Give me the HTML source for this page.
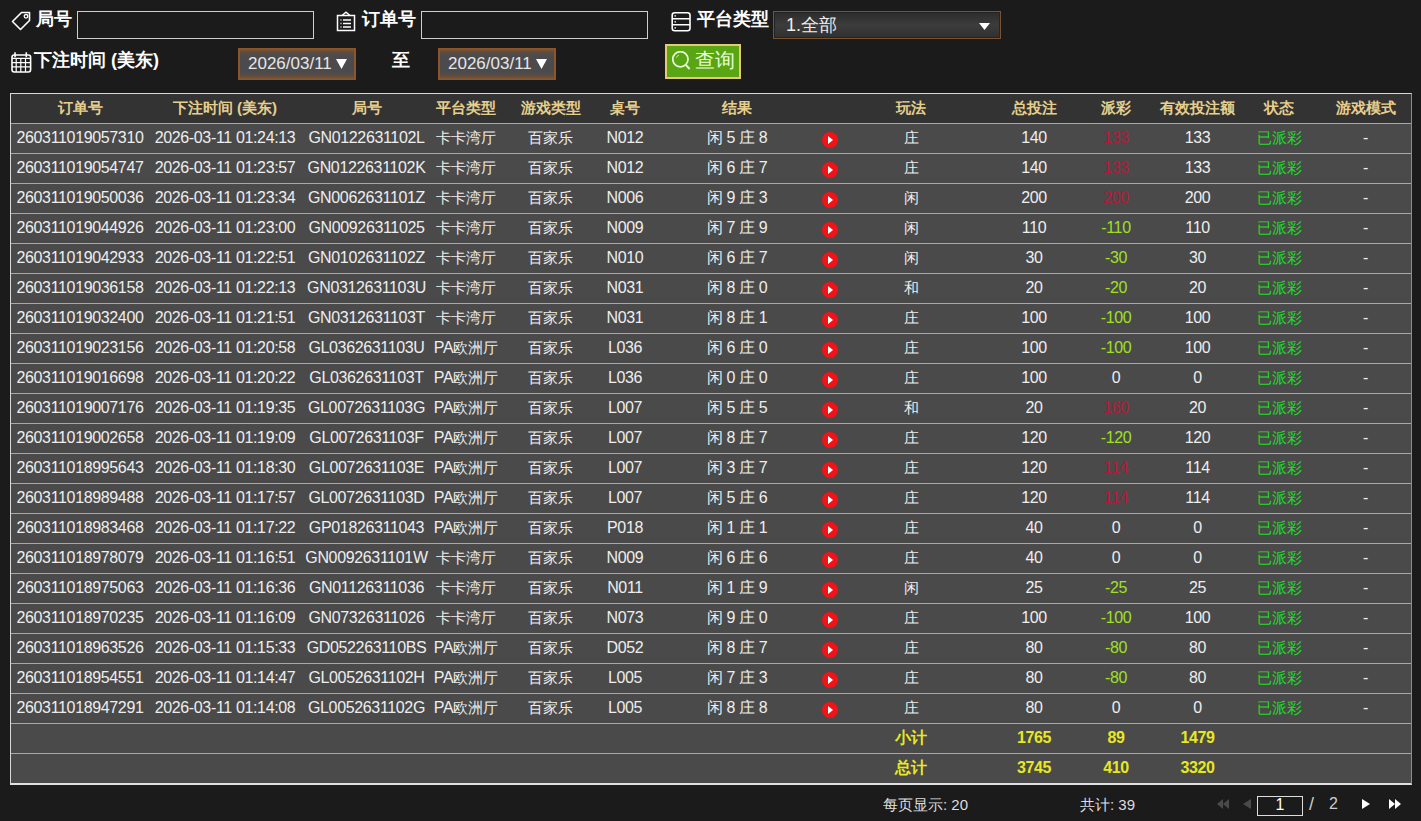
<!DOCTYPE html>
<html><head><meta charset="utf-8">
<style>
html,body{margin:0;padding:0}
body{width:1421px;height:821px;overflow:hidden;position:relative;background:#1b1b1b;font-family:"Liberation Sans",sans-serif;color:#eee}
.lbl{position:absolute;font-weight:bold;font-size:18px;color:#fff;line-height:20px;white-space:nowrap}
.ico{position:absolute}
.inp{position:absolute;box-sizing:border-box;border:1px solid #cfcfcf;background:#1b1b1b}
.date{position:absolute;box-sizing:border-box;border:solid #8e5628;border-width:1px 2px;background:linear-gradient(#84542c 0,#5e4c3e 3px,#4b4b4d 7px,#4b4b4d 23px,#5e4c3e 27px,#84542c 30px);color:#e6e6e6;font-size:17px;line-height:30px;padding-left:8px;white-space:nowrap}
.sel{position:absolute;box-sizing:border-box;border:1px solid #7a5230;box-shadow:inset 0 0 0 1px #242424;background:linear-gradient(#2c2c2c,#3c3c3c 50%,#303030);color:#eee;font-size:18px;line-height:26px;padding-left:12px}
.btn{position:absolute;box-sizing:border-box;border:2px solid #e6c878;background:#5aa514;color:#eaffd8;font-size:20px;line-height:28px}
.tbl{position:absolute;left:10px;top:93px;width:1402px;height:692px;box-sizing:border-box;border:1px solid #d8d8d8;border-right-color:#8c8c8c;border-bottom:2px solid #e0e0e0;background:#4a4a4a}
.hd{position:absolute;left:11px;top:94px;width:1400px;height:29px;background:#333}
.rw{position:absolute;left:11px;width:1400px;height:30px;line-height:30px;font-size:16px;letter-spacing:-0.35px;color:#eee}
.hd s,.rw s{position:absolute;top:0;text-decoration:none;white-space:nowrap;transform:translateX(-50%)}
.hd s{color:#e6cf8c;font-weight:bold;font-size:15px;line-height:27px}
.rw i{position:absolute;top:8.5px;width:16px;height:16px;border-radius:50%;background:#f01418}
.rw i:after{content:"";position:absolute;left:6px;top:4px;border-left:5px solid #fff;border-top:4px solid transparent;border-bottom:4px solid transparent}
.cj{font-size:14.5px;letter-spacing:0}
.cj u{text-decoration:none;font-size:16px;letter-spacing:-0.35px}
.rd{color:#b8173a}
.gn{color:#9ee21e}
.st{color:#22de22}
.sm s{color:#e8e820;font-weight:bold}
b{position:absolute;left:11px;width:1400px;height:1px;background:#a8a8a8}
.ft{position:absolute;font-size:15px;color:#ddd;line-height:20px;white-space:nowrap}
</style></head><body>
<!-- row 1 controls -->
<svg class="ico" style="left:11px;top:11px" width="20" height="20" viewBox="0 0 20 20"><path d="M1.5 10.5 L10.5 1.5 L18.5 1.5 L18.5 9.5 L9.5 18.5 Z" fill="none" stroke="#fff" stroke-width="1.6" stroke-linejoin="round"/><circle cx="15" cy="5.3" r="1.8" fill="none" stroke="#fff" stroke-width="1.3"/></svg>
<div class="lbl" style="left:36px;top:9px">局号</div>
<div class="inp" style="left:77px;top:11px;width:237px;height:28px"></div>
<svg class="ico" style="left:336px;top:11px" width="20" height="21" viewBox="0 0 20 21"><rect x="1.5" y="4.5" width="17" height="15" fill="none" stroke="#fff" stroke-width="1.5"/><path d="M6 4.5 L10 1.2 L14 4.5" fill="none" stroke="#fff" stroke-width="1.4"/><path d="M7 9h8M7 12.5h8M7 16h8" stroke="#fff" stroke-width="1.3"/><path d="M4.5 9h1M4.5 12.5h1M4.5 16h1" stroke="#fff" stroke-width="1.3"/></svg>
<div class="lbl" style="left:362px;top:9px">订单号</div>
<div class="inp" style="left:421px;top:11px;width:227px;height:28px"></div>
<svg class="ico" style="left:671px;top:12px" width="20" height="20" viewBox="0 0 20 20"><rect x="1.2" y="0.8" width="17.8" height="18" rx="2.5" fill="none" stroke="#fff" stroke-width="1.6"/><path d="M1.2 6.8h17.8M1.2 12.8h17.8" stroke="#fff" stroke-width="1.5"/><circle cx="4.2" cy="3.8" r="0.9" fill="#ddd"/><circle cx="4.2" cy="9.8" r="0.9" fill="#ddd"/><circle cx="4.2" cy="15.8" r="0.9" fill="#ddd"/></svg>
<div class="lbl" style="left:697px;top:9px">平台类型</div>
<div class="sel" style="left:773px;top:11px;width:228px;height:28px">1.全部<svg style="position:absolute;left:205px;top:11px" width="11" height="7" viewBox="0 0 11 7"><path d="M0 0H11L5.5 7Z" fill="#fff"/></svg></div>
<!-- row 2 controls -->
<svg class="ico" style="left:11px;top:52px" width="21" height="21" viewBox="0 0 21 21"><rect x="1" y="3" width="18.6" height="17" rx="2.2" fill="none" stroke="#fff" stroke-width="1.6"/><path d="M4 0.3v5M15.3 0.3v5" stroke="#fff" stroke-width="1.6"/><path d="M1 6.3h18.6M1 10.6h18.6M1 14.8h18.6M5.2 6.3v13.7M9.8 6.3v13.7M14.5 6.3v13.7" stroke="#fff" stroke-width="1.2"/></svg>
<div class="lbl" style="left:34px;top:50px">下注时间 (美东)</div>
<div class="date" style="left:238px;top:48px;width:118px;height:32px">2026/03/11<svg style="position:absolute;left:96px;top:10px" width="11" height="10" viewBox="0 0 11 10"><path d="M0 0H11L5.5 10Z" fill="#fff"/></svg></div>
<div class="lbl" style="left:392px;top:50px">至</div>
<div class="date" style="left:438px;top:48px;width:118px;height:32px">2026/03/11<svg style="position:absolute;left:96px;top:10px" width="11" height="10" viewBox="0 0 11 10"><path d="M0 0H11L5.5 10Z" fill="#fff"/></svg></div>
<div class="btn" style="left:665px;top:44px;width:76px;height:35px"><svg style="position:absolute;left:5px;top:5px" width="20" height="22" viewBox="0 0 20 22"><circle cx="8.4" cy="8.3" r="7.6" fill="none" stroke="#eaffd8" stroke-width="1.7"/><path d="M4.5 6.5A4.5 4.5 0 0 1 7 4" fill="none" stroke="#cfe8b0" stroke-width="1"/><path d="M13.8 13.8L17.6 18" stroke="#eaffd8" stroke-width="1.9"/></svg><span style="position:absolute;left:28px;top:0">查询</span></div>
<!-- table -->
<div class="tbl"></div>
<div class="hd"><s style="left:69px">订单号</s><s style="left:214px">下注时间 (美东)</s><s style="left:355.5px">局号</s><s style="left:455px">平台类型</s><s style="left:539.5px">游戏类型</s><s style="left:614px">桌号</s><s style="left:726px">结果</s><s style="left:900px">玩法</s><s style="left:1023px">总投注</s><s style="left:1105px">派彩</s><s style="left:1186.5px">有效投注额</s><s style="left:1268px">状态</s><s style="left:1354.5px">游戏模式</s></div>
<div class="rw" style="top:123px"><s style="left:69px">260311019057310</s><s style="left:214px">2026-03-11 01:24:13</s><s style="left:355.5px">GN0122631102L</s><s style="left:455px" class="cj">卡卡湾厅</s><s style="left:539.5px" class="cj">百家乐</s><s style="left:614px">N012</s><s style="left:726px">闲 5 庄 8</s><i style="left:811px"></i><s style="left:900px" class="cj">庄</s><s style="left:1023px">140</s><s style="left:1105px" class="rd">133</s><s style="left:1186.5px">133</s><s style="left:1268px" class="st cj">已派彩</s><s style="left:1354.5px">-</s></div>
<div class="rw" style="top:153px"><s style="left:69px">260311019054747</s><s style="left:214px">2026-03-11 01:23:57</s><s style="left:355.5px">GN0122631102K</s><s style="left:455px" class="cj">卡卡湾厅</s><s style="left:539.5px" class="cj">百家乐</s><s style="left:614px">N012</s><s style="left:726px">闲 6 庄 7</s><i style="left:811px"></i><s style="left:900px" class="cj">庄</s><s style="left:1023px">140</s><s style="left:1105px" class="rd">133</s><s style="left:1186.5px">133</s><s style="left:1268px" class="st cj">已派彩</s><s style="left:1354.5px">-</s></div>
<div class="rw" style="top:183px"><s style="left:69px">260311019050036</s><s style="left:214px">2026-03-11 01:23:34</s><s style="left:355.5px">GN0062631101Z</s><s style="left:455px" class="cj">卡卡湾厅</s><s style="left:539.5px" class="cj">百家乐</s><s style="left:614px">N006</s><s style="left:726px">闲 9 庄 3</s><i style="left:811px"></i><s style="left:900px" class="cj">闲</s><s style="left:1023px">200</s><s style="left:1105px" class="rd">200</s><s style="left:1186.5px">200</s><s style="left:1268px" class="st cj">已派彩</s><s style="left:1354.5px">-</s></div>
<div class="rw" style="top:213px"><s style="left:69px">260311019044926</s><s style="left:214px">2026-03-11 01:23:00</s><s style="left:355.5px">GN00926311025</s><s style="left:455px" class="cj">卡卡湾厅</s><s style="left:539.5px" class="cj">百家乐</s><s style="left:614px">N009</s><s style="left:726px">闲 7 庄 9</s><i style="left:811px"></i><s style="left:900px" class="cj">闲</s><s style="left:1023px">110</s><s style="left:1105px" class="gn">-110</s><s style="left:1186.5px">110</s><s style="left:1268px" class="st cj">已派彩</s><s style="left:1354.5px">-</s></div>
<div class="rw" style="top:243px"><s style="left:69px">260311019042933</s><s style="left:214px">2026-03-11 01:22:51</s><s style="left:355.5px">GN0102631102Z</s><s style="left:455px" class="cj">卡卡湾厅</s><s style="left:539.5px" class="cj">百家乐</s><s style="left:614px">N010</s><s style="left:726px">闲 6 庄 7</s><i style="left:811px"></i><s style="left:900px" class="cj">闲</s><s style="left:1023px">30</s><s style="left:1105px" class="gn">-30</s><s style="left:1186.5px">30</s><s style="left:1268px" class="st cj">已派彩</s><s style="left:1354.5px">-</s></div>
<div class="rw" style="top:273px"><s style="left:69px">260311019036158</s><s style="left:214px">2026-03-11 01:22:13</s><s style="left:355.5px">GN0312631103U</s><s style="left:455px" class="cj">卡卡湾厅</s><s style="left:539.5px" class="cj">百家乐</s><s style="left:614px">N031</s><s style="left:726px">闲 8 庄 0</s><i style="left:811px"></i><s style="left:900px" class="cj">和</s><s style="left:1023px">20</s><s style="left:1105px" class="gn">-20</s><s style="left:1186.5px">20</s><s style="left:1268px" class="st cj">已派彩</s><s style="left:1354.5px">-</s></div>
<div class="rw" style="top:303px"><s style="left:69px">260311019032400</s><s style="left:214px">2026-03-11 01:21:51</s><s style="left:355.5px">GN0312631103T</s><s style="left:455px" class="cj">卡卡湾厅</s><s style="left:539.5px" class="cj">百家乐</s><s style="left:614px">N031</s><s style="left:726px">闲 8 庄 1</s><i style="left:811px"></i><s style="left:900px" class="cj">庄</s><s style="left:1023px">100</s><s style="left:1105px" class="gn">-100</s><s style="left:1186.5px">100</s><s style="left:1268px" class="st cj">已派彩</s><s style="left:1354.5px">-</s></div>
<div class="rw" style="top:333px"><s style="left:69px">260311019023156</s><s style="left:214px">2026-03-11 01:20:58</s><s style="left:355.5px">GL0362631103U</s><s style="left:455px" class="cj"><u>PA</u>欧洲厅</s><s style="left:539.5px" class="cj">百家乐</s><s style="left:614px">L036</s><s style="left:726px">闲 6 庄 0</s><i style="left:811px"></i><s style="left:900px" class="cj">庄</s><s style="left:1023px">100</s><s style="left:1105px" class="gn">-100</s><s style="left:1186.5px">100</s><s style="left:1268px" class="st cj">已派彩</s><s style="left:1354.5px">-</s></div>
<div class="rw" style="top:363px"><s style="left:69px">260311019016698</s><s style="left:214px">2026-03-11 01:20:22</s><s style="left:355.5px">GL0362631103T</s><s style="left:455px" class="cj"><u>PA</u>欧洲厅</s><s style="left:539.5px" class="cj">百家乐</s><s style="left:614px">L036</s><s style="left:726px">闲 0 庄 0</s><i style="left:811px"></i><s style="left:900px" class="cj">庄</s><s style="left:1023px">100</s><s style="left:1105px">0</s><s style="left:1186.5px">0</s><s style="left:1268px" class="st cj">已派彩</s><s style="left:1354.5px">-</s></div>
<div class="rw" style="top:393px"><s style="left:69px">260311019007176</s><s style="left:214px">2026-03-11 01:19:35</s><s style="left:355.5px">GL0072631103G</s><s style="left:455px" class="cj"><u>PA</u>欧洲厅</s><s style="left:539.5px" class="cj">百家乐</s><s style="left:614px">L007</s><s style="left:726px">闲 5 庄 5</s><i style="left:811px"></i><s style="left:900px" class="cj">和</s><s style="left:1023px">20</s><s style="left:1105px" class="rd">160</s><s style="left:1186.5px">20</s><s style="left:1268px" class="st cj">已派彩</s><s style="left:1354.5px">-</s></div>
<div class="rw" style="top:423px"><s style="left:69px">260311019002658</s><s style="left:214px">2026-03-11 01:19:09</s><s style="left:355.5px">GL0072631103F</s><s style="left:455px" class="cj"><u>PA</u>欧洲厅</s><s style="left:539.5px" class="cj">百家乐</s><s style="left:614px">L007</s><s style="left:726px">闲 8 庄 7</s><i style="left:811px"></i><s style="left:900px" class="cj">庄</s><s style="left:1023px">120</s><s style="left:1105px" class="gn">-120</s><s style="left:1186.5px">120</s><s style="left:1268px" class="st cj">已派彩</s><s style="left:1354.5px">-</s></div>
<div class="rw" style="top:453px"><s style="left:69px">260311018995643</s><s style="left:214px">2026-03-11 01:18:30</s><s style="left:355.5px">GL0072631103E</s><s style="left:455px" class="cj"><u>PA</u>欧洲厅</s><s style="left:539.5px" class="cj">百家乐</s><s style="left:614px">L007</s><s style="left:726px">闲 3 庄 7</s><i style="left:811px"></i><s style="left:900px" class="cj">庄</s><s style="left:1023px">120</s><s style="left:1105px" class="rd">114</s><s style="left:1186.5px">114</s><s style="left:1268px" class="st cj">已派彩</s><s style="left:1354.5px">-</s></div>
<div class="rw" style="top:483px"><s style="left:69px">260311018989488</s><s style="left:214px">2026-03-11 01:17:57</s><s style="left:355.5px">GL0072631103D</s><s style="left:455px" class="cj"><u>PA</u>欧洲厅</s><s style="left:539.5px" class="cj">百家乐</s><s style="left:614px">L007</s><s style="left:726px">闲 5 庄 6</s><i style="left:811px"></i><s style="left:900px" class="cj">庄</s><s style="left:1023px">120</s><s style="left:1105px" class="rd">114</s><s style="left:1186.5px">114</s><s style="left:1268px" class="st cj">已派彩</s><s style="left:1354.5px">-</s></div>
<div class="rw" style="top:513px"><s style="left:69px">260311018983468</s><s style="left:214px">2026-03-11 01:17:22</s><s style="left:355.5px">GP01826311043</s><s style="left:455px" class="cj"><u>PA</u>欧洲厅</s><s style="left:539.5px" class="cj">百家乐</s><s style="left:614px">P018</s><s style="left:726px">闲 1 庄 1</s><i style="left:811px"></i><s style="left:900px" class="cj">庄</s><s style="left:1023px">40</s><s style="left:1105px">0</s><s style="left:1186.5px">0</s><s style="left:1268px" class="st cj">已派彩</s><s style="left:1354.5px">-</s></div>
<div class="rw" style="top:543px"><s style="left:69px">260311018978079</s><s style="left:214px">2026-03-11 01:16:51</s><s style="left:355.5px">GN0092631101W</s><s style="left:455px" class="cj">卡卡湾厅</s><s style="left:539.5px" class="cj">百家乐</s><s style="left:614px">N009</s><s style="left:726px">闲 6 庄 6</s><i style="left:811px"></i><s style="left:900px" class="cj">庄</s><s style="left:1023px">40</s><s style="left:1105px">0</s><s style="left:1186.5px">0</s><s style="left:1268px" class="st cj">已派彩</s><s style="left:1354.5px">-</s></div>
<div class="rw" style="top:573px"><s style="left:69px">260311018975063</s><s style="left:214px">2026-03-11 01:16:36</s><s style="left:355.5px">GN01126311036</s><s style="left:455px" class="cj">卡卡湾厅</s><s style="left:539.5px" class="cj">百家乐</s><s style="left:614px">N011</s><s style="left:726px">闲 1 庄 9</s><i style="left:811px"></i><s style="left:900px" class="cj">闲</s><s style="left:1023px">25</s><s style="left:1105px" class="gn">-25</s><s style="left:1186.5px">25</s><s style="left:1268px" class="st cj">已派彩</s><s style="left:1354.5px">-</s></div>
<div class="rw" style="top:603px"><s style="left:69px">260311018970235</s><s style="left:214px">2026-03-11 01:16:09</s><s style="left:355.5px">GN07326311026</s><s style="left:455px" class="cj">卡卡湾厅</s><s style="left:539.5px" class="cj">百家乐</s><s style="left:614px">N073</s><s style="left:726px">闲 9 庄 0</s><i style="left:811px"></i><s style="left:900px" class="cj">庄</s><s style="left:1023px">100</s><s style="left:1105px" class="gn">-100</s><s style="left:1186.5px">100</s><s style="left:1268px" class="st cj">已派彩</s><s style="left:1354.5px">-</s></div>
<div class="rw" style="top:633px"><s style="left:69px">260311018963526</s><s style="left:214px">2026-03-11 01:15:33</s><s style="left:355.5px">GD052263110BS</s><s style="left:455px" class="cj"><u>PA</u>欧洲厅</s><s style="left:539.5px" class="cj">百家乐</s><s style="left:614px">D052</s><s style="left:726px">闲 8 庄 7</s><i style="left:811px"></i><s style="left:900px" class="cj">庄</s><s style="left:1023px">80</s><s style="left:1105px" class="gn">-80</s><s style="left:1186.5px">80</s><s style="left:1268px" class="st cj">已派彩</s><s style="left:1354.5px">-</s></div>
<div class="rw" style="top:663px"><s style="left:69px">260311018954551</s><s style="left:214px">2026-03-11 01:14:47</s><s style="left:355.5px">GL0052631102H</s><s style="left:455px" class="cj"><u>PA</u>欧洲厅</s><s style="left:539.5px" class="cj">百家乐</s><s style="left:614px">L005</s><s style="left:726px">闲 7 庄 3</s><i style="left:811px"></i><s style="left:900px" class="cj">庄</s><s style="left:1023px">80</s><s style="left:1105px" class="gn">-80</s><s style="left:1186.5px">80</s><s style="left:1268px" class="st cj">已派彩</s><s style="left:1354.5px">-</s></div>
<div class="rw" style="top:693px"><s style="left:69px">260311018947291</s><s style="left:214px">2026-03-11 01:14:08</s><s style="left:355.5px">GL0052631102G</s><s style="left:455px" class="cj"><u>PA</u>欧洲厅</s><s style="left:539.5px" class="cj">百家乐</s><s style="left:614px">L005</s><s style="left:726px">闲 8 庄 8</s><i style="left:811px"></i><s style="left:900px" class="cj">庄</s><s style="left:1023px">80</s><s style="left:1105px">0</s><s style="left:1186.5px">0</s><s style="left:1268px" class="st cj">已派彩</s><s style="left:1354.5px">-</s></div>
<div class="rw sm" style="top:723px"><s style="left:900px">小计</s><s style="left:1023px">1765</s><s style="left:1105px">89</s><s style="left:1186.5px">1479</s></div>
<div class="rw sm" style="top:753px"><s style="left:900px">总计</s><s style="left:1023px">3745</s><s style="left:1105px">410</s><s style="left:1186.5px">3320</s></div><b style="top:123px"></b><b style="top:153px"></b><b style="top:183px"></b><b style="top:213px"></b><b style="top:243px"></b><b style="top:273px"></b><b style="top:303px"></b><b style="top:333px"></b><b style="top:363px"></b><b style="top:393px"></b><b style="top:423px"></b><b style="top:453px"></b><b style="top:483px"></b><b style="top:513px"></b><b style="top:543px"></b><b style="top:573px"></b><b style="top:603px"></b><b style="top:633px"></b><b style="top:663px"></b><b style="top:693px"></b><b style="top:723px"></b><b style="top:753px"></b>
<!-- footer -->
<div class="ft" style="left:883px;top:795px">每页显示: 20</div>
<div class="ft" style="left:1080px;top:795px">共计: 39</div>
<svg class="ico" style="left:1217px;top:799px" width="12" height="10" viewBox="0 0 12 10"><path d="M6 0L0 5L6 10ZM12 0L6 5L12 10Z" fill="#4a4a4a"/></svg>
<svg class="ico" style="left:1243px;top:799px" width="8" height="10" viewBox="0 0 8 10"><path d="M8 0L0 5L8 10Z" fill="#4a4a4a"/></svg>
<div class="inp" style="left:1257px;top:796px;width:46px;height:20px;border-color:#ddd;background:#1b1b1b;color:#fff;font-size:16px;line-height:16px;text-align:center">1</div>
<div class="ft" style="left:1309px;top:794px;font-size:18px;color:#ccc">/</div>
<div class="ft" style="left:1329px;top:794px;font-size:16px;color:#ccc">2</div>
<svg class="ico" style="left:1362px;top:799px" width="8" height="10" viewBox="0 0 8 10"><path d="M0 0L8 5L0 10Z" fill="#fff"/></svg>
<svg class="ico" style="left:1389px;top:799px" width="12" height="10" viewBox="0 0 12 10"><path d="M0 0L6 5L0 10ZM6 0L12 5L6 10Z" fill="#fff"/></svg>
</body></html>
